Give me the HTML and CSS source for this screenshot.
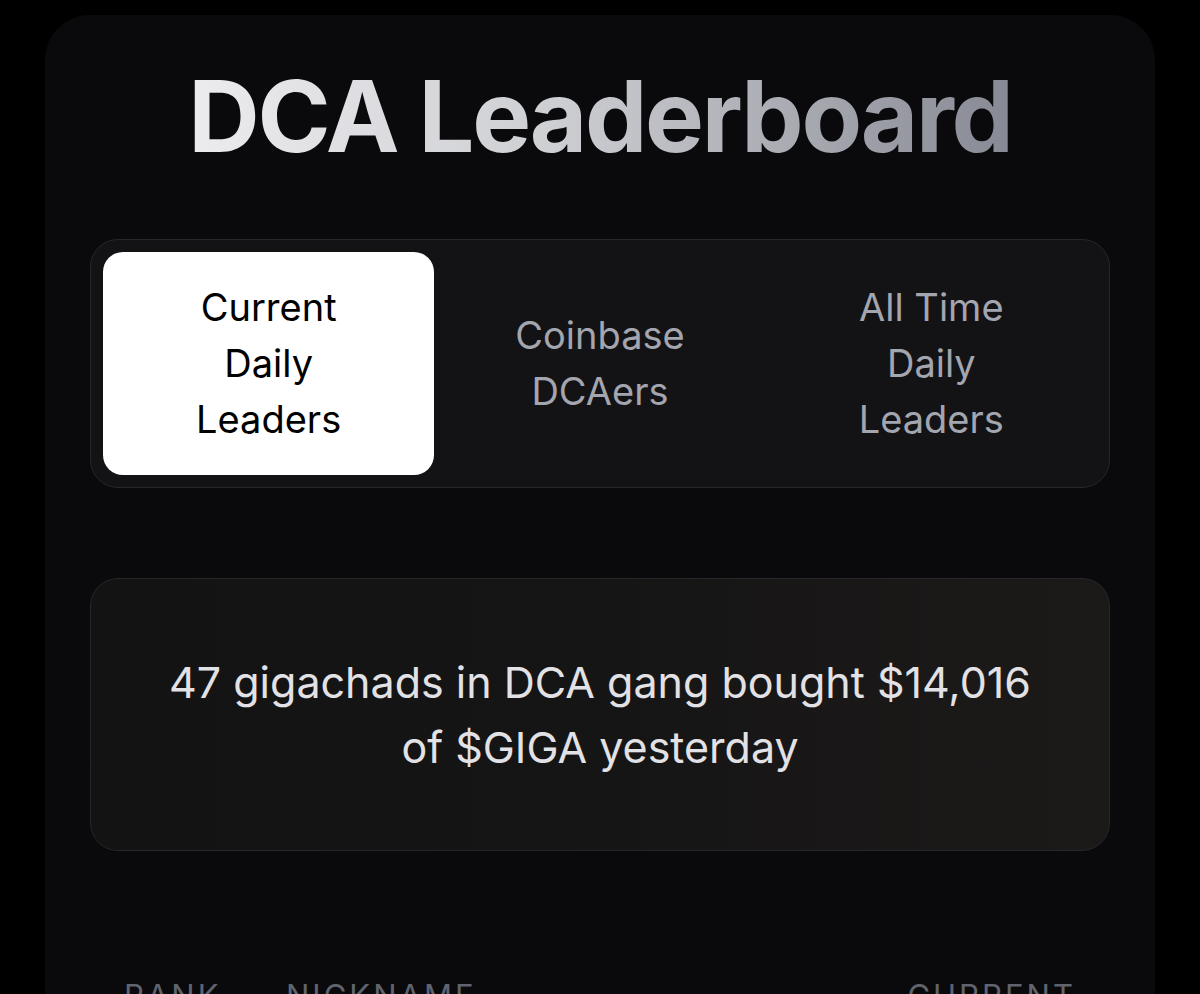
FILE: index.html
```html
<!DOCTYPE html>
<html lang="en">
<head>
<meta charset="utf-8">
<title>DCA Leaderboard</title>
<link rel="stylesheet" href="styles.css">
</head>
<body>
<main class="card">
  <h1 class="title">DCA Leaderboard</h1>
  <nav class="tabs">
    <button class="tab active">Current<br>Daily<br>Leaders</button>
    <button class="tab">Coinbase<br>DCAers</button>
    <button class="tab">All Time<br>Daily<br>Leaders</button>
  </nav>
  <section class="stats">
    <p>47 gigachads in DCA gang bought $14,016<br>of $GIGA yesterday</p>
  </section>
  <div class="thead">
    <span class="th rank">Rank</span>
    <span class="th nick">Nickname</span>
    <span class="th cur">Current</span>
  </div>
</main>
</body>
</html>
```
FILE: styles.css
```css
html, body {
  margin: 0;
  padding: 0;
  background: #000;
  height: 994px;
  overflow: hidden;
}
body {
  font-family: Inter, "Noto Sans", sans-serif;
}
.card {
  margin: 15px 45px 0;
  background: #0a0a0c;
  border-radius: 45px;
  padding: 41px 45px 0;
  min-height: 1100px;
  box-sizing: border-box;
}
.title {
  margin: 0 auto;
  text-align: center;
  font-size: 99px;
  line-height: 120px;
  font-weight: 700;
  letter-spacing: -2.3px;
  background: linear-gradient(90deg, #ececef 0%, #cdced2 45%, #878994 100%);
  -webkit-background-clip: text;
  background-clip: text;
  color: transparent;
  width: max-content;
}
.tabs {
  margin-top: 63px;
  display: grid;
  grid-template-columns: repeat(3, 1fr);
  padding: 12px;
  background: #131316;
  border: 1px solid #26262b;
  border-radius: 28px;
}
.tab {
  font-family: inherit;
  border: 0;
  background: transparent;
  color: #a3a5af;
  font-size: 38px;
  line-height: 56px;
  padding: 27px 0 28px;
  border-radius: 20px;
  text-align: center;
  display: flex;
  align-items: center;
  justify-content: center;
}
.tab.active {
  background: #fff;
  color: #000;
}
.stats {
  margin-top: 90px;
  height: 273px;
  box-sizing: border-box;
  border: 1px solid #26262b;
  border-radius: 28px;
  background: linear-gradient(90deg, #131313 0%, #161515 50%, #1c1a19 100%);
  display: flex;
  align-items: center;
  justify-content: center;
}
.stats p {
  margin: 0;
  text-align: center;
  color: #e2e2e6;
  font-size: 43px;
  line-height: 65px;
}
.thead {
  margin-top: 125px;
  display: flex;
  color: #60646e;
  font-size: 31px;
  line-height: 40px;
  text-transform: uppercase;
  letter-spacing: 3px;
}
.th.rank { margin-left: 34px; width: 162px; }
.th.nick { flex: 1; }
.th.cur { margin-right: 34px; }
```
